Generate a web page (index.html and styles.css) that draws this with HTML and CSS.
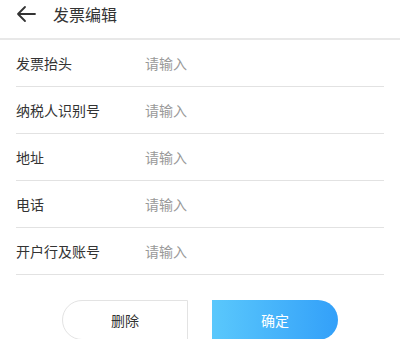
FILE: index.html
```html
<!DOCTYPE html>
<html lang="zh">
<head>
<meta charset="utf-8">
<link rel="stylesheet" href="styles.css">
</head>
<body>
<div class="page">
  <header class="header">
    <svg class="back" width="20" height="18" viewBox="0 0 20 18"><path d="M19 9H2M9 2L2 9l7 7" fill="none" stroke="#333" stroke-width="1.8" stroke-linecap="round" stroke-linejoin="round"/></svg>
    <span class="title">发票编辑</span>
  </header>
  <div class="form">
    <div class="row"><span class="label">发票抬头</span><span class="ph">请输入</span></div>
    <div class="row"><span class="label">纳税人识别号</span><span class="ph">请输入</span></div>
    <div class="row"><span class="label">地址</span><span class="ph">请输入</span></div>
    <div class="row"><span class="label">电话</span><span class="ph">请输入</span></div>
    <div class="row"><span class="label">开户行及账号</span><span class="ph">请输入</span></div>
  </div>
  <div class="actions">
    <div class="btn btn-del">删除</div>
    <div class="btn btn-ok">确定</div>
  </div>
</div>
</body>
</html>
```
FILE: styles.css
```css
* { box-sizing: border-box; }
html, body { margin: 0; padding: 0; background: #fff; }
body { font-family: "Noto Sans CJK SC", "Noto Sans", sans-serif; color: #333; }
.page { width: 400px; height: 339px; overflow: hidden; }
.header {
  height: 40px;
  padding: 0 16px 10px;
  display: flex;
  align-items: center;
  border-bottom: 2px solid #e8e8e8;
}
.back { margin-right: 17px; }
.title { font-size: 16px; color: #333; }
.form { padding: 0 16px; }
.row {
  height: 47px;
  display: flex;
  align-items: center;
  border-bottom: 1px solid #e2e2e2;
}
.label { width: 129px; font-size: 14px; color: #333; }
.ph { font-size: 14px; color: #999; }
.actions {
  display: flex;
  justify-content: center;
  gap: 24px;
  margin-top: 25px;
}
.btn {
  width: 126px;
  height: 40px;
  display: flex;
  align-items: center;
  justify-content: center;
  font-size: 14px;
}
.btn-del {
  border: 1px solid #e3e3e3;
  border-radius: 20px 0 0 20px;
  color: #333;
}
.btn-ok {
  background: linear-gradient(to right, #5ac8fc, #33a0f9);
  border-radius: 0 20px 20px 0;
  color: #fff;
}
```
